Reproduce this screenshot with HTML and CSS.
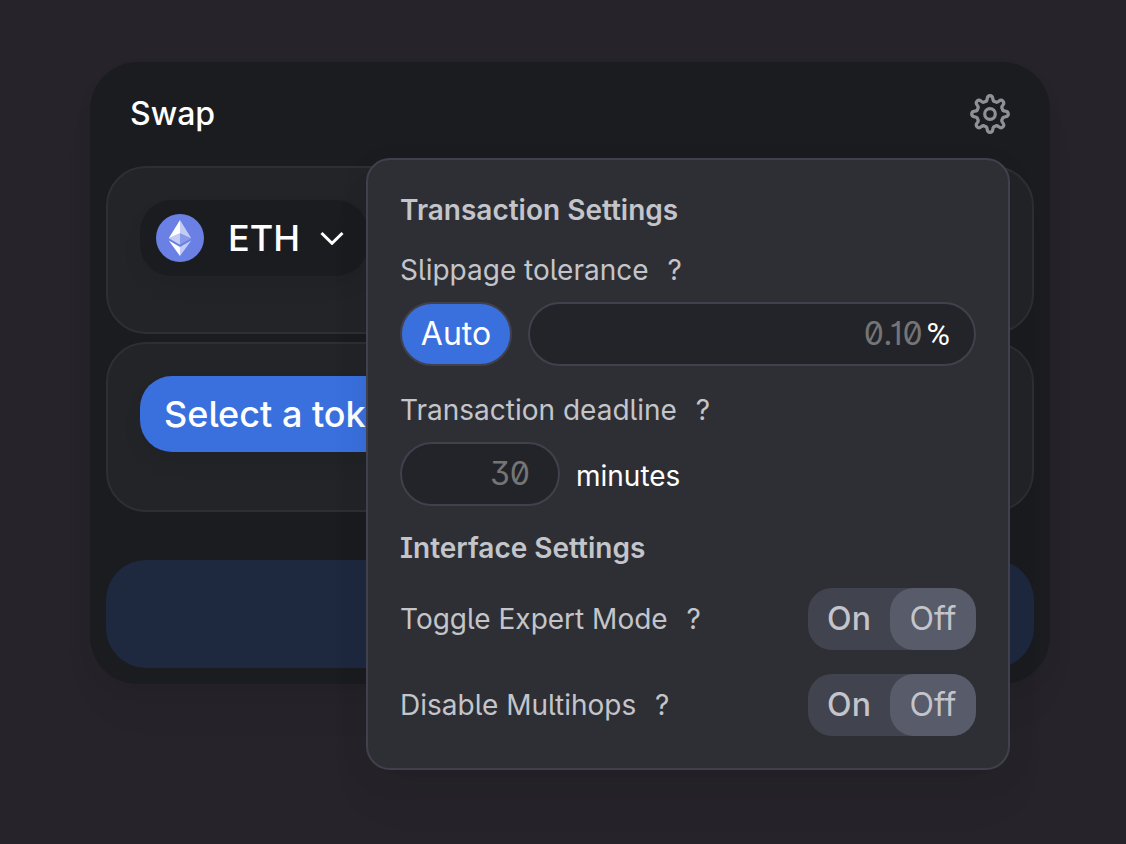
FILE: index.html
```html
<!DOCTYPE html>
<html lang="en">
<head>
<meta charset="utf-8">
<meta name="viewport" content="width=device-width, initial-scale=1">
<title>Swap</title>
<link rel="stylesheet" href="styles.css">
</head>
<body>
<main class="card">
  <header class="card-header">
    <h1 class="card-title">Swap</h1>
    <div class="settings">
      <button class="settings-toggle" type="button" aria-label="Settings" aria-expanded="true">
        <svg class="gear" viewBox="-20 -20 40 40" fill="none" stroke="currentColor" stroke-width="3.200" stroke-linejoin="round" aria-hidden="true">
          <circle r="5.300"/>
          <path id="gear-outline" d=""/>
        </svg>
      </button>
      <section class="popover" aria-label="Settings">
        <h2 class="popover-title">Transaction Settings</h2>
        <div class="field">
          <div class="field-label"><label for="slippage">Slippage tolerance</label><button class="help" type="button" aria-label="About slippage tolerance">?</button></div>
          <div class="field-row">
            <button class="auto" type="button">Auto</button>
            <div class="input-box grow"><input id="slippage" class="number" type="text" inputmode="decimal" placeholder="0.10"><span class="unit">%</span></div>
          </div>
        </div>
        <div class="field">
          <div class="field-label"><label for="deadline">Transaction deadline</label><button class="help" type="button" aria-label="About transaction deadline">?</button></div>
          <div class="field-row">
            <div class="input-box short"><input id="deadline" class="number" type="text" inputmode="numeric" placeholder="30"></div>
            <span class="minutes">minutes</span>
          </div>
        </div>
        <h2 class="popover-title">Interface Settings</h2>
        <div class="option">
          <div class="field-label"><span id="expert">Toggle Expert Mode</span><button class="help" type="button" aria-label="About expert mode">?</button></div>
          <button class="switch" type="button" role="switch" aria-checked="false" aria-labelledby="expert"><span class="switch-on">On</span><span class="switch-off">Off</span></button>
        </div>
        <div class="option">
          <div class="field-label"><span id="multihops">Disable Multihops</span><button class="help" type="button" aria-label="About multihops">?</button></div>
          <button class="switch" type="button" role="switch" aria-checked="false" aria-labelledby="multihops"><span class="switch-on">On</span><span class="switch-off">Off</span></button>
        </div>
      </section>
    </div>
  </header>
  <div class="panels">
    <div class="panel">
      <button class="token" type="button">
        <svg class="eth" viewBox="0 0 48 48" aria-hidden="true">
          <circle cx="24" cy="24" r="24" fill="#6a80e4"/>
          <g fill="#fff">
            <path fill-opacity=".6" d="M24 6v13.300l11.240 5.030z"/>
            <path d="M24 6L12.760 24.330 24 19.300z"/>
            <path fill-opacity=".6" d="M24 32.950V42l11.250-15.560z"/>
            <path d="M24 42v-9.050l-11.240-6.510z"/>
            <path fill-opacity=".2" d="M24 30.860l11.240-6.530L24 19.310z"/>
            <path fill-opacity=".6" d="M12.760 24.330L24 30.860V19.310z"/>
          </g>
        </svg>
        <span class="token-name">ETH</span>
        <svg class="chevron" viewBox="0 0 24 14" fill="none" stroke="currentColor" stroke-width="3" aria-hidden="true"><path d="M1.500 2L12 12.300 22.500 2"/></svg>
      </button>
    </div>
    <div class="panel output">
      <button class="token select" type="button">Select a token</button>
    </div>
  </div>
  <button class="submit" type="button" disabled aria-label="Swap"></button>
</main>
<script src="gear.js"></script>
</body>
</html>
```

FILE: styles.css
```css
* { box-sizing: border-box; }

body {
  margin: 0;
  min-height: 100vh;
  padding: 62px 76px 0 90px;
  background: #26242a;
  color: #fff;
  font-family: Inter, "Liberation Sans", sans-serif;
  font-optical-sizing: none;
  font-variation-settings: "opsz" 14;
  font-feature-settings: "ss01", "ss02", "cv01", "cv03", "zero";
}

button, input {
  margin: 0;
  padding: 0;
  border: 0;
  background: none;
  color: inherit;
  font: inherit;
  font-optical-sizing: inherit;
  font-variation-settings: inherit;
  font-feature-settings: inherit;
}

h1, h2 { margin: 0; }

.card {
  padding: 32px 16px 16px;
  border-radius: 48px;
  background: #1b1c1f;
  box-shadow: 0 32px 48px rgba(0, 0, 0, 0.02), 0 8px 16px rgba(0, 0, 0, 0.05);
}

.card-header {
  display: flex;
  align-items: center;
  justify-content: space-between;
  padding: 0 24px 32px;
}

.card-title {
  font-size: 32px;
  font-weight: 500;
  line-height: 40px;
}

.settings { position: relative; }

.settings-toggle {
  display: block;
  color: #8f9095;
}

.gear {
  display: block;
  width: 40px;
  height: 40px;
}

.popover {
  position: absolute;
  z-index: 2;
  top: 64px;
  right: 0;
  width: 644px;
  padding: 32px;
  border: 2px solid #40414c;
  border-radius: 24px;
  background: #2e2f34;
  box-shadow: 0 32px 48px rgba(0, 0, 0, 0.04), 0 8px 32px rgba(0, 0, 0, 0.06);
  color: #c3c5cb;
  font-size: 28px;
  line-height: 36px;
}

.popover-title {
  margin-bottom: 24px;
  font-size: 28px;
  font-weight: 600;
}

.field { margin-bottom: 24px; }

.field + .field { margin-top: 26px; }

.field + .popover-title { margin-bottom: 22px; }

.field-label {
  display: flex;
  align-items: center;
  gap: 16px;
}

.help { width: 20px; }

.field-row {
  display: flex;
  align-items: center;
  gap: 16px;
  margin-top: 14px;
}

.auto, .input-box {
  height: 64px;
  border: 2px solid #40414c;
  border-radius: 32px;
  font-size: 32px;
}

.auto {
  width: 112px;
  background: #3a70de;
  color: #fff;
}

.input-box {
  display: flex;
  align-items: center;
  background: #232429;
}

.grow {
  flex: 1;
  padding: 0 24px;
}

.short {
  width: 160px;
  padding: 0 28px;
}

.number {
  flex: 1;
  min-width: 0;
  width: 100%;
  text-align: right;
  outline: 0;
}

.number::placeholder {
  color: #757575;
  opacity: 1;
}

.unit {
  margin-left: 4px;
  color: #fff;
  font-family: Roboto, sans-serif;
}

.minutes {
  padding-top: 4px;
  color: #fff;
}

.option {
  display: flex;
  align-items: center;
  justify-content: space-between;
}

.option + .option { margin-top: 24px; }

.switch {
  display: flex;
  align-items: center;
  height: 62px;
  border-radius: 24px;
  background: #41434e;
  font-size: 32px;
}

.switch-on, .switch-off {
  display: flex;
  align-items: center;
  justify-content: center;
  height: 62px;
}

.switch-on {
  width: 82px;
  font-weight: 500;
}

.switch-off {
  width: 86px;
  border-radius: 24px;
  background: #585b69;
}

.panels {
  display: flex;
  flex-direction: column;
  gap: 8px;
}

.panel {
  padding: 32px 32px 56px;
  border: 2px solid #2e2f33;
  border-radius: 40px;
  background: #232428;
}

.output { padding-bottom: 58px; }

.token {
  display: flex;
  align-items: center;
  height: 76px;
  padding: 0 24px 0 16px;
  border-radius: 32px;
  background: #1b1c1f;
  box-shadow: 0 12px 20px rgba(0, 0, 0, 0.06);
  font-size: 36px;
  font-weight: 500;
}

.eth {
  width: 48px;
  height: 48px;
  margin-right: 24px;
}

.token-name { margin-right: 20px; }

.chevron {
  width: 24px;
  height: 14px;
}

.select {
  padding: 0 24px;
  background: #3a70de;
}

.submit {
  display: block;
  width: 100%;
  height: 108px;
  margin-top: 48px;
  border-radius: 40px;
  background: #1e2940;
}
```

FILE: gear.js
```js
// Eight rounded teeth around the hub, alternating tips and valleys.
const point = (radius, degrees) => {
  const angle = degrees * Math.PI / 180;
  return (radius * Math.sin(angle)).toFixed(2) + " " + (-radius * Math.cos(angle)).toFixed(2);
};
let outline = "M" + point(18.3, 0);
for (let tooth = 0; tooth < 360; tooth += 45) {
  outline += "C" + point(18.9, tooth + 15) + " " + point(12.6, tooth + 4) + " " + point(13.4, tooth + 22.5);
  outline += "C" + point(12.6, tooth + 41) + " " + point(18.9, tooth + 30) + " " + point(18.3, tooth + 45);
}
document.getElementById("gear-outline").setAttribute("d", outline + "Z");
```
